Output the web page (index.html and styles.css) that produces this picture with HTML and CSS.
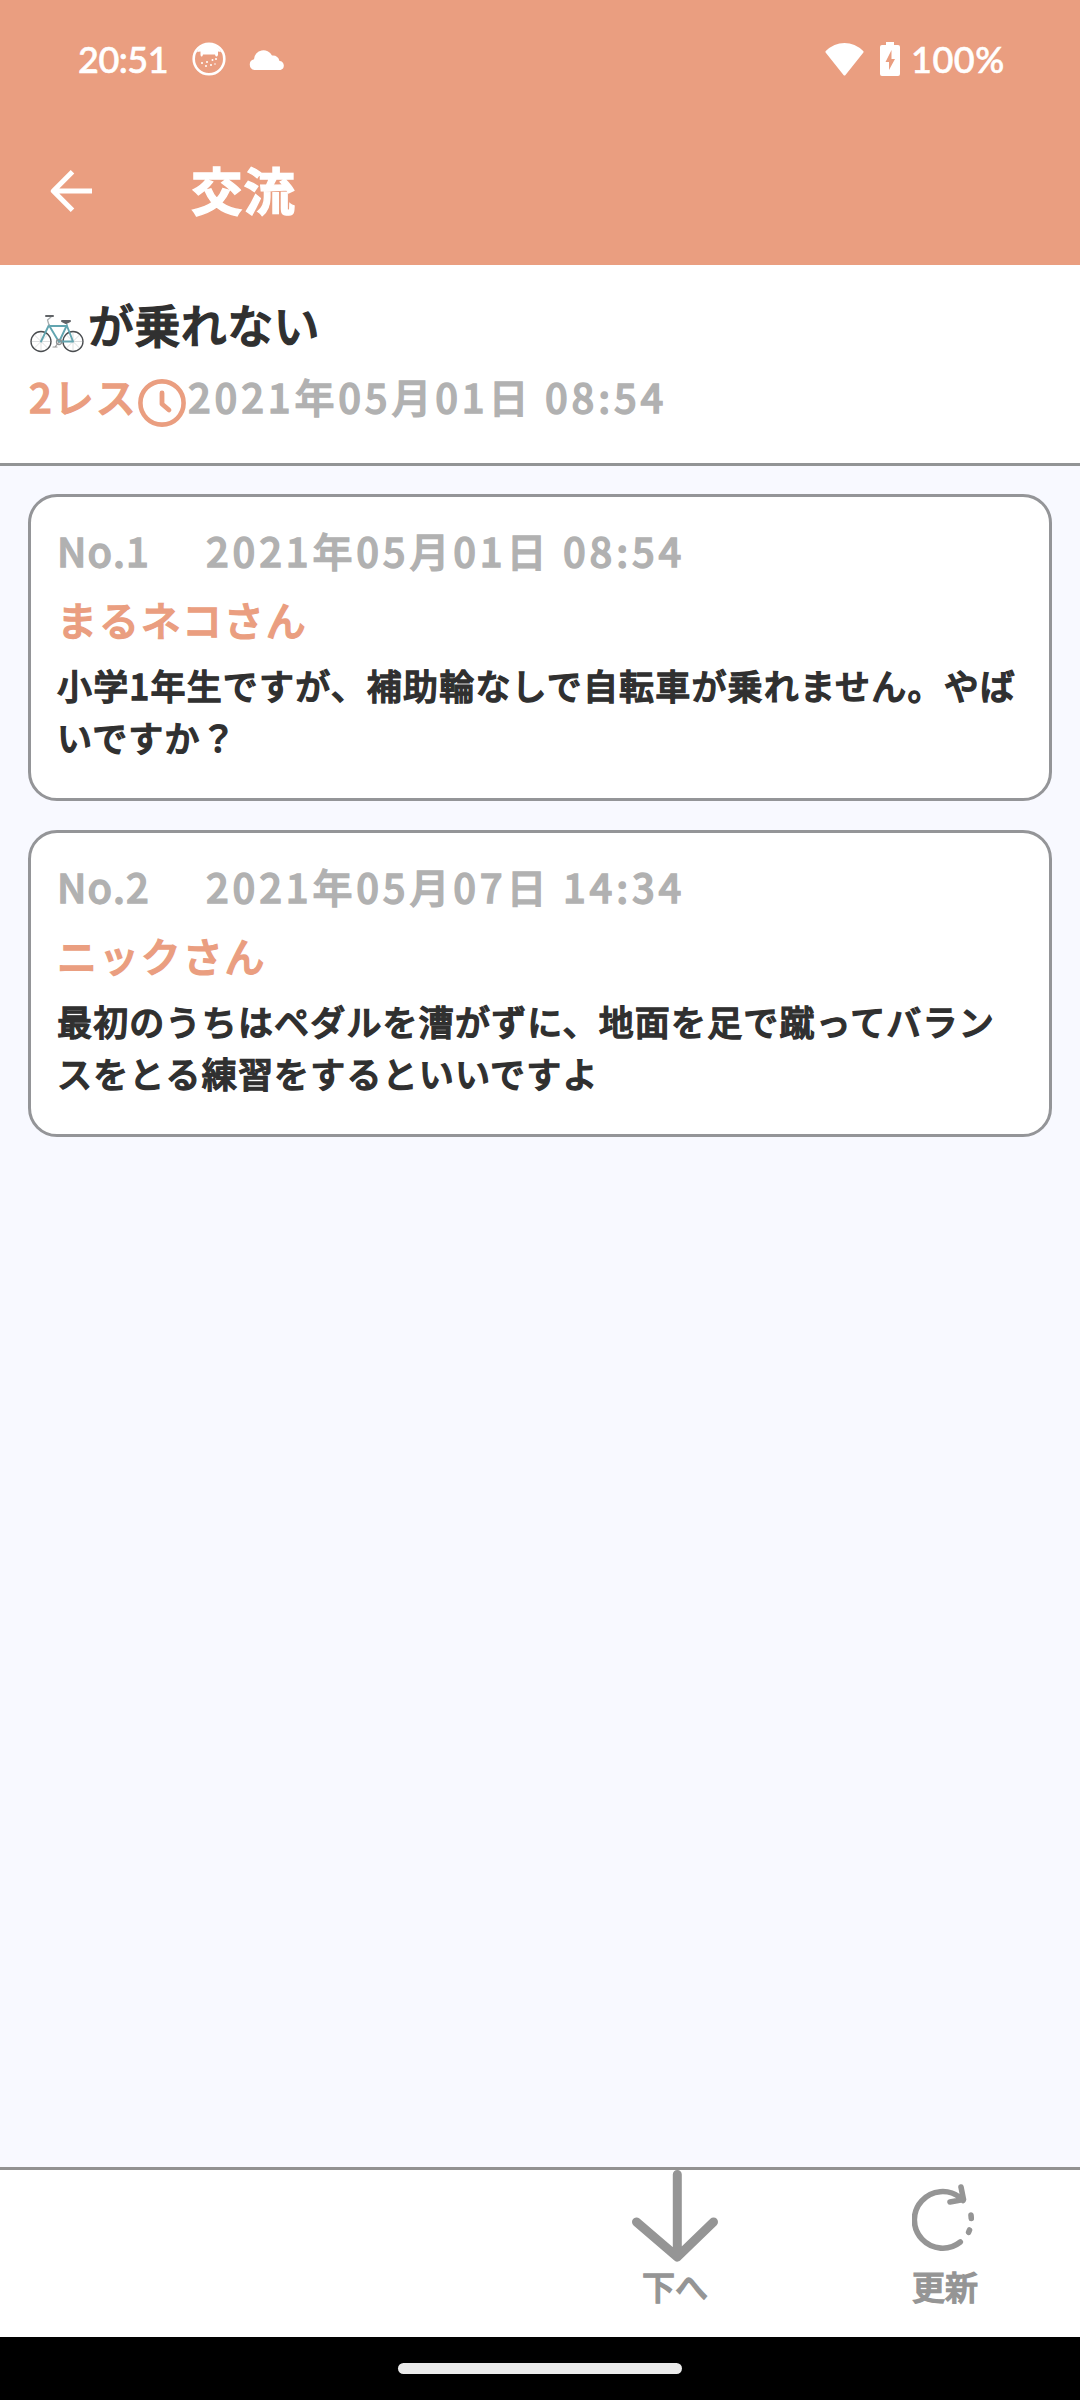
FILE: index.html
```html
<!DOCTYPE html>
<html lang="ja">
<head>
<meta charset="utf-8">
<title>交流</title>
<link rel="stylesheet" href="styles.css">
</head>
<body>
<div class="screen">
  <header class="top">
    <div class="status">
      <span class="clock">20:51</span>
      <svg class="cat" viewBox="0 0 34 34"><circle cx="17" cy="17" r="15.3" fill="none" stroke="#fff" stroke-width="2.6"/><path d="M5 10Q9 2 17 2T29 10L26 9.500V13Q25 15.500 23.500 14L23 12.500H11L10.500 14Q9 15.500 8.500 13V9.500Z" fill="#fff"/><g fill="#fff"><circle cx="10" cy="21" r="1"/><circle cx="15" cy="20" r="1"/><circle cx="20.500" cy="18" r="1"/><circle cx="24" cy="17" r="1"/><circle cx="14" cy="24" r="1"/><circle cx="19" cy="23" r="1"/><circle cx="23" cy="22" r=".8"/></g></svg>
      <svg class="cloud" viewBox="0 0 36 21"><path d="M5.500 21A5.500 5.500 0 0 1 5 10.200A9.500 9.500 0 0 1 23 6.500Q29 6 30.500 12A4.600 4.600 0 0 1 31.500 21Z" fill="#fff"/></svg>
      <span class="spacer"></span>
      <svg class="wifi" viewBox="0 0 39 34"><path d="M.6 10.500Q0 9.700.8 9Q9 1 19.500 1T38.200 9Q39 9.700 38.400 10.500L20.500 33Q19.500 34 18.500 33Z" fill="#fff"/></svg>
      <svg class="battery" viewBox="0 0 20 34"><path fill-rule="evenodd" d="M6 0H14V3H18Q20 3 20 5V32Q20 34 18 34H2Q0 34 0 32V5Q0 3 2 3H6ZM11.500 8L5.500 20H9V28L15 17H11.500Z" fill="#fff"/></svg>
      <span class="percent">100%</span>
    </div>
    <div class="appbar">
      <svg class="back" viewBox="0 0 42 42"><path d="M42 21H4M22.500 1.800L3.300 21L22.500 40.200" fill="none" stroke="#fff" stroke-width="5"/></svg>
      <h1>交流</h1>
    </div>
  </header>
  <section class="thread">
    <h2>
      <svg class="bike" viewBox="0 0 54 39" fill="none" stroke-linecap="round" stroke-linejoin="round"><g stroke="#b9bdbf" stroke-width=".5"><path d="M1 27.500H21M11 17.500V37.500M4 20.500L18 34.500M18 20.500L4 34.500M33 27.500H53M43 17.500V37.500M36 20.500L50 34.500M50 20.500L36 34.500"/></g><g stroke="#4a4d50" stroke-width="1.300"><circle cx="11" cy="27.500" r="10"/><circle cx="43" cy="27.500" r="10"/></g><path d="M11 27.500L19 11M19 12H36M20 13L29 28L37 11M37 12L43 27.500H29" stroke="#62a5b0" stroke-width="1.900"/><path d="M19 11L17.500 6L21 3" stroke="#a9aeb0" stroke-width="1.300"/><path d="M16 2H23M32 7H40L36 9Z" stroke="#606367" stroke-width="2"/><circle cx="29" cy="28" r="2.500" stroke="#8c9294" stroke-width="1.300"/><path d="M29 28L25 33M23 33H27" stroke="#999" stroke-width="1.200"/></svg><span>が乗れない</span>
    </h2>
    <div class="meta">
      <span class="replies">2レス</span>
      <svg class="time-icon" viewBox="0 0 48 48" fill="none" stroke="#ea9e80"><circle cx="24" cy="24" r="21.600" stroke-width="4.600"/><path d="M24 14V25L31 31" stroke-width="4.800" stroke-linecap="round" stroke-linejoin="round"/></svg>
      <time>2021年05月01日 08:54</time>
    </div>
  </section>
  <main class="posts">
    <article class="post">
      <div class="info"><span class="no">No.1</span><time>2021年05月01日 08:54</time></div>
      <div class="name">まるネコさん</div>
      <p>小学1年生ですが、補助輪なしで自転車が乗れません。やばいですか？</p>
    </article>
    <article class="post">
      <div class="info"><span class="no">No.2</span><time>2021年05月07日 14:34</time></div>
      <div class="name">ニックさん</div>
      <p>最初のうちはペダルを漕がずに、地面を足で蹴ってバランスをとる練習をするといいですよ</p>
    </article>
  </main>
  <footer class="tools">
    <div class="tool down">
      <svg class="down-icon" viewBox="0 0 86 93"><path d="M45.300 4.500V87M4.500 52L45.300 87L81.500 52" fill="none" stroke="#959595" stroke-width="9" stroke-linecap="round" stroke-linejoin="round"/></svg>
      <span>下へ</span>
    </div>
    <div class="tool refresh">
      <svg class="refresh-icon" viewBox="0 0 62 67" fill="none" stroke="#959595" stroke-width="5.600" stroke-linecap="round" stroke-linejoin="round"><path d="M48.300 58A28.300 28.300 0 1 1 48 13.500L51 16.500M49 3L51.500 15.500L38 18M59 31L59.300 34.500M57.500 46L56.600 48.300"/></svg>
      <span>更新</span>
    </div>
  </footer>
  <nav class="gesture"><div class="pill"></div></nav>
</div>
</body>
</html>
```
FILE: styles.css
```css
* { box-sizing: border-box; margin: 0; padding: 0; }
body {
  font-family: "Noto Sans CJK JP", sans-serif;
  font-weight: 500;
  -webkit-text-stroke: 1.3px currentColor;
  stroke-linejoin: round;
  background: #fff;
}
svg { display: block; flex: none; }
.screen { width: 1080px; height: 2400px; display: flex; flex-direction: column; overflow: hidden; }

.top { height: 265px; background: #ea9e80; color: #fff; }
.status {
  height: 118px; padding: 0 76px 0 78px; display: flex; align-items: center;
  font-family: Lato, sans-serif; font-size: 36px; font-weight: 500;
  -webkit-text-stroke: .6px currentColor; white-space: nowrap;
}
.clock { width: 114px; letter-spacing: -.5px; }
.cat { width: 34px; height: 34px; }
.cloud { width: 36px; height: 21px; margin-left: 23px; }
.spacer { flex: 1; }
.wifi { width: 39px; height: 34px; }
.battery { width: 20px; height: 34px; margin: 0 11px 0 16px; }
.percent { width: 93px; letter-spacing: .5px; }
.appbar { height: 146px; display: flex; align-items: center; padding-left: 50px; }
.back { width: 42px; height: 42px; }
.appbar h1 { margin-left: 99px; font-size: 51.5px; line-height: 60px; font-weight: 700; letter-spacing: 1px; padding-bottom: 5px; }

.thread { height: 201px; padding: 28px 28px 0; border-bottom: 3px solid #929495; background: #fff; }
.thread h2 { height: 61px; display: flex; align-items: center; color: #303030; font-size: 46px; line-height: 61px; font-weight: 500; letter-spacing: .4px; }
.bike { width: 54px; height: 39px; margin: 19px 4px 0 2px; }
.meta { height: 62px; margin-top: 11px; display: flex; align-items: center; font-size: 40px; line-height: 62px; letter-spacing: 1.5px; color: #b1b1b1; white-space: nowrap; }
.meta time, .info time { letter-spacing: 3.8px; }
.replies { width: 109px; margin-left: 1px; letter-spacing: 2px; color: #ea9e80; }
.time-icon { width: 48px; height: 48px; margin: 14px 2px 0 0; }

.posts { flex: 1; padding: 28px; display: flex; flex-direction: column; gap: 29px; background: #f8f9ff; }
.post { height: 307px; padding: 24px 26px 0; border: 3px solid #949598; border-radius: 29px; background: #fff; }
.info { display: flex; font-size: 40px; line-height: 58px; letter-spacing: 1.2px; color: #b1b1b1; white-space: nowrap; }
.no { width: 149px; }
.name { margin: 11px 0; font-size: 40px; line-height: 58px; letter-spacing: 1.9px; color: #ea9e80; }
.post p { font-size: 35px; line-height: 52px; letter-spacing: 1.18px; color: #303030; }

.tools { height: 170px; border-top: 3px solid #929292; background: #fff; display: grid; grid-template-columns: repeat(4, 1fr); color: #959595; }
.tool { display: flex; flex-direction: column; align-items: center; font-size: 33px; line-height: 46px; }
.down { grid-column: 3; }
.refresh { grid-column: 4; }
.down-icon { width: 86px; height: 93px; }
.refresh-icon { width: 62px; height: 67px; margin: 14px 4px 12px 0; }

.gesture { height: 63px; background: #000; padding-top: 26px; }
.pill { width: 284px; height: 11px; margin: 0 auto; border-radius: 6px; background: #ebebeb; }
```
